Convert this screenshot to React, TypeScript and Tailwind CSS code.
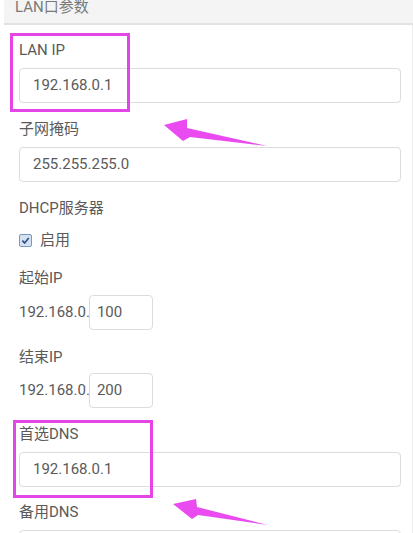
import React from "react";

const font = { fontFamily: 'Roboto, "Noto Sans CJK SC", sans-serif' };

function Label({ children, className = "" }: { children: React.ReactNode; className?: string }) {
  return <div className={`h-[20px] text-[15px] leading-[20px] text-[#5a5a5a] ${className}`}>{children}</div>;
}

function TextField({ value, className = "" }: { value: string; className?: string }) {
  return (
    <div
      className={`flex h-[35px] w-[382px] items-center rounded-[4px] border border-[#dcdcdc] pl-[13px] text-[15px] text-[#5a5a5a] ${className}`}
    >
      {value}
    </div>
  );
}

function RangeRow({ value, className = "" }: { value: string; className?: string }) {
  return (
    <div className={`flex items-center text-[15px] text-[#5a5a5a] ${className}`}>
      <span>192.168.0.</span>
      <div className="flex h-[35px] w-[64px] items-center rounded-[4px] border border-[#dcdcdc] pl-[7px] -ml-[1px]">
        {value}
      </div>
    </div>
  );
}

export default function App() {
  return (
    <div className="relative h-[533px] w-[413px] overflow-hidden bg-white" style={font}>
      <div className="ml-[4px]">
        <div className="h-[25px] overflow-hidden border-b-2 border-[#e2e2e2] bg-[#f4f4f4] pl-[11px]">
          <div className="-mt-[3px] text-[15px] leading-[20px] text-[#7a7a7a]">LAN口参数</div>
        </div>
        <div className="border-r border-[#ececec] pl-[15px] pt-[15px] pb-[20px]">
          <Label>LAN IP</Label>
          <TextField value="192.168.0.1" className="mt-[8px]" />
          <Label className="mt-[16px]">子网掩码</Label>
          <TextField value="255.255.255.0" className="mt-[8px]" />
          <Label className="mt-[16px]">DHCP服务器</Label>
          <div className="mt-[12px] flex h-[20px] items-center text-[15px] text-[#5a5a5a]">
            <span className="flex h-[13px] w-[13px] items-center justify-center rounded-[2px] border border-[#7d97c2] bg-[#d4e2f4]">
              <svg width="9" height="9" viewBox="0 0 10 10">
                <path d="M1.5 5.2 L4 7.7 L8.6 2.2" fill="none" stroke="#2d4f86" strokeWidth="1.8" />
              </svg>
            </span>
            <span className="ml-[8px]">启用</span>
          </div>
          <Label className="mt-[18px]">起始IP</Label>
          <RangeRow value="100" className="mt-[7px]" />
          <Label className="mt-[17px]">结束IP</Label>
          <RangeRow value="200" className="mt-[6px]" />
          <Label className="mt-[16px]">首选DNS</Label>
          <TextField value="192.168.0.1" className="mt-[8px]" />
          <Label className="mt-[15px]">备用DNS</Label>
          <TextField value="" className="mt-[8px]" />
        </div>
      </div>

      <div className="pointer-events-none absolute left-[10px] top-[33px] h-[79px] w-[120px] border-[3px] border-[#e545e6]" />
      <div className="pointer-events-none absolute left-[13px] top-[420px] h-[78px] w-[140px] border-[3px] border-[#e545e6]" />

      <svg className="pointer-events-none absolute left-0 top-0" width="413" height="533">
        <polygon
          points="164,125 187,119 187,128 267,146 190,137 183,141"
          fill="#ea4bf0"
        />
        <polygon
          points="173,504 196,499 197,507 268,525 198,515 192,519"
          fill="#ea4bf0"
        />
      </svg>
    </div>
  );
}
